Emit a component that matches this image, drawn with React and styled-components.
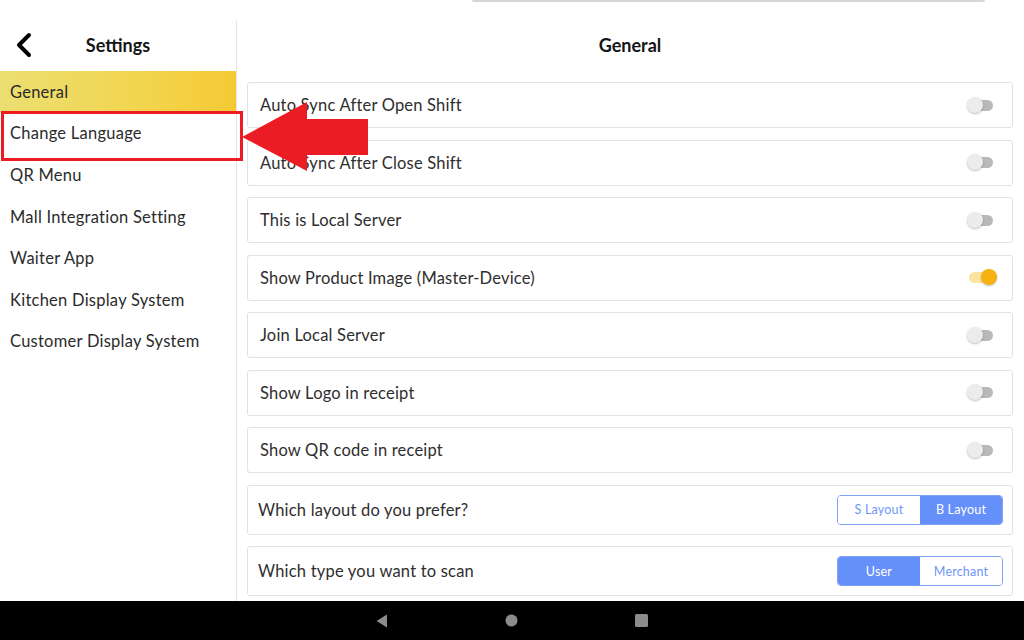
import React from 'react';
import styled, { createGlobalStyle } from 'styled-components';

const GlobalStyle = createGlobalStyle`
  html, body {
    margin: 0;
    padding: 0;
    background: #fff;
    font-family: Lato, "Open Sans", sans-serif;
    color: #2e2e2e;
  }
  * { box-sizing: border-box; }
`;

const Screen = styled.div`
  position: relative;
  width: 1024px;
  height: 640px;
  display: flex;
  flex-direction: column;
  overflow: hidden;
  background: #fff;
`;

const TopEdge = styled.div`
  position: absolute;
  top: 0;
  left: 472px;
  width: 513px;
  height: 2px;
  background: #d6d6d6;
  border-radius: 0 0 2px 2px;
`;

const Body = styled.div`
  flex: 1;
  display: flex;
  min-height: 0;
`;

const Sidebar = styled.aside`
  width: 237px;
  margin-top: 20px;
  border-right: 1px solid #e6e6e6;
  display: flex;
  flex-direction: column;
`;

const SideHeader = styled.div`
  position: relative;
  height: 51px;
  padding-bottom: 2px;
  display: flex;
  align-items: center;
  justify-content: center;
  font-size: 18px;
  font-weight: 700;
  color: #151515;
`;

const BackButton = styled.div`
  position: absolute;
  left: 14px;
  top: 12px;
  width: 22px;
  height: 26px;
  display: flex;
`;

const MenuList = styled.div`
  position: relative;
  display: flex;
  flex-direction: column;
`;

const MenuItem = styled.div`
  height: 41.6px;
  display: flex;
  align-items: center;
  padding-left: 10px;
  font-size: 16.5px;
  letter-spacing: 0.25px;
  color: #2b2b2b;
  background: ${(p) => (p.active ? 'linear-gradient(90deg, #ebdf72 0%, #f2d54e 60%, #f5c935 100%)' : 'transparent')};
`;

const Highlight = styled.div`
  position: absolute;
  left: 1px;
  top: 40px;
  width: 242px;
  height: 50px;
  border: 3px solid #ec1c24;
  pointer-events: none;
`;

const Arrow = styled.svg`
  position: absolute;
  left: 240px;
  top: 100px;
  z-index: 5;
`;

const Content = styled.main`
  flex: 1;
  margin-top: 20px;
  padding: 0 11px 0 10px;
  display: flex;
  flex-direction: column;
`;

const ContentTitle = styled.div`
  height: 51px;
  padding-bottom: 2px;
  display: flex;
  align-items: center;
  justify-content: center;
  font-size: 18px;
  font-weight: 700;
  color: #151515;
`;

const Rows = styled.div`
  padding-top: 11px;
  display: flex;
  flex-direction: column;
  gap: 11.5px;
`;

const Row = styled.div`
  height: ${(p) => (p.tall ? '50px' : '46px')};
  border: 1px solid #e2e2e2;
  border-radius: 3px;
  display: flex;
  align-items: center;
  justify-content: space-between;
  padding: ${(p) => (p.tall ? '0 9px 0 10px' : '0 19px 0 12px')};
  font-size: 16.5px;
  letter-spacing: 0.2px;
  color: #2e2e2e;
`;

const Track = styled.div`
  position: relative;
  width: 24px;
  height: 11px;
  border-radius: 6px;
  background: ${(p) => (p.on ? '#fde3a0' : '#b9b9b9')};
`;

const Knob = styled.div`
  position: absolute;
  top: -3px;
  left: ${(p) => (p.on ? '12px' : '-2px')};
  width: 16px;
  height: 16px;
  border-radius: 50%;
  background: ${(p) => (p.on ? '#f6b30f' : '#ececec')};
  box-shadow: 0 1px 2px rgba(0, 0, 0, 0.25);
`;

const Segmented = styled.div`
  display: flex;
  height: 30px;
  border: 1px solid #7ea1f6;
  border-radius: 4px;
  overflow: hidden;
`;

const Segment = styled.div`
  width: 82px;
  display: flex;
  align-items: center;
  justify-content: center;
  font-size: 12.5px;
  letter-spacing: 0.2px;
  color: ${(p) => (p.active ? '#fff' : '#6f96f5')};
  background: ${(p) => (p.active ? '#6690f9' : '#fff')};
`;

const NavBar = styled.div`
  height: 39px;
  background: #000;
  display: flex;
  align-items: center;
  justify-content: center;
  gap: 117px;
`;

const NavIcon = styled.svg`
  display: block;
`;

const menu = [
  'General',
  'Change Language',
  'QR Menu',
  'Mall Integration Setting',
  'Waiter App',
  'Kitchen Display System',
  'Customer Display System',
];

const toggles = [
  { label: 'Auto Sync After Open Shift', on: false },
  { label: 'Auto Sync After Close Shift', on: false },
  { label: 'This is Local Server', on: false },
  { label: 'Show Product Image (Master-Device)', on: true },
  { label: 'Join Local Server', on: false },
  { label: 'Show Logo in receipt', on: false },
  { label: 'Show QR code in receipt', on: false },
];

const choices = [
  { label: 'Which layout do you prefer?', options: ['S Layout', 'B Layout'], active: 1 },
  { label: 'Which type you want to scan', options: ['User', 'Merchant'], active: 0 },
];

const Toggle = ({ on }) => (
  <Track on={on ? 1 : 0}>
    <Knob on={on ? 1 : 0} />
  </Track>
);

const App = () => {
  return (
    <Screen>
      <GlobalStyle />
      <TopEdge />
      <Body>
        <Sidebar>
          <SideHeader>
            <BackButton>
              <svg width="22" height="26" viewBox="0 0 22 26">
                <polyline points="15,3 5,13 15,23" fill="none" stroke="#000" strokeWidth="4" strokeLinecap="round" strokeLinejoin="round" />
              </svg>
            </BackButton>
            Settings
          </SideHeader>
          <MenuList>
            {menu.map((item, i) => (
              <MenuItem key={item} active={i === 0 ? 1 : 0}>{item}</MenuItem>
            ))}
            <Highlight />
          </MenuList>
        </Sidebar>
        <Content>
          <ContentTitle>General</ContentTitle>
          <Rows>
            {toggles.map((t) => (
              <Row key={t.label}>
                {t.label}
                <Toggle on={t.on} />
              </Row>
            ))}
            {choices.map((c) => (
              <Row key={c.label} tall>
                {c.label}
                <Segmented>
                  {c.options.map((o, i) => (
                    <Segment key={o} active={i === c.active ? 1 : 0}>{o}</Segment>
                  ))}
                </Segmented>
              </Row>
            ))}
          </Rows>
        </Content>
      </Body>
      <NavBar>
        <NavIcon width="12" height="14" viewBox="0 0 12 14">
          <polygon points="11,0.5 11,13.5 0.5,7" fill="#8c8c8c" />
        </NavIcon>
        <NavIcon width="13" height="13" viewBox="0 0 13 13">
          <circle cx="6.5" cy="6.5" r="6" fill="#8c8c8c" />
        </NavIcon>
        <NavIcon width="13" height="13" viewBox="0 0 13 13">
          <rect x="0" y="0" width="13" height="13" rx="1.5" fill="#8c8c8c" />
        </NavIcon>
      </NavBar>
      <Arrow width="130" height="75" viewBox="0 0 130 75">
        <polygon points="2,37 67,2 67,19 128,19 128,55 67,55 67,71" fill="#ec1c24" />
      </Arrow>
    </Screen>
  );
};

export default App;
